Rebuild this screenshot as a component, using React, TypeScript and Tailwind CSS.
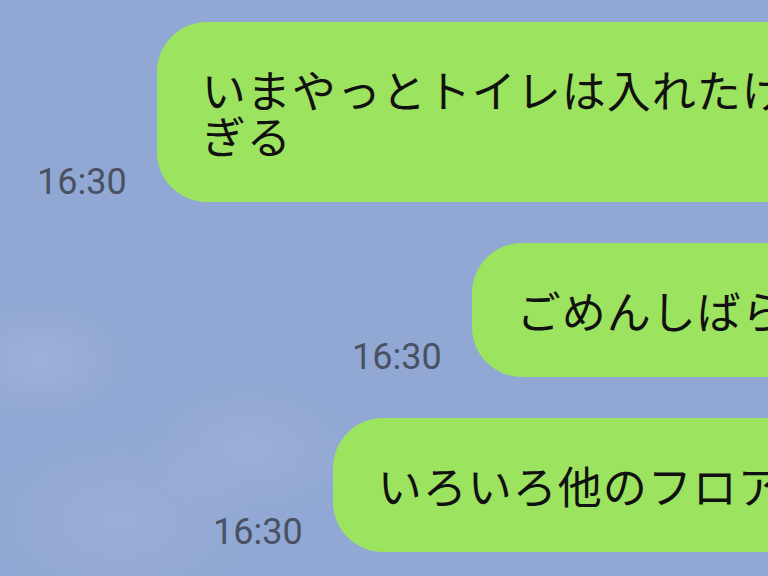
const MESSAGES = [
  { time: "16:30", indent: "pl-[37px]", lines: ["いまやっとトイレは入れたけど混みす", "ぎる"] },
  { time: "16:30", indent: "pl-[352px]", lines: ["ごめんしばらく返信できないかも"] },
  { time: "16:30", indent: "pl-[213px]", lines: ["いろいろ他のフロアも見てくるね"] },
];

export default function App() {
  return (
    <div className="w-[768px] h-[576px] overflow-hidden bg-[#91a8d4] bg-[radial-gradient(ellipse_90px_60px_at_40px_360px,rgba(255,255,255,0.10),transparent),radial-gradient(ellipse_110px_70px_at_250px_450px,rgba(255,255,255,0.08),transparent),radial-gradient(ellipse_140px_90px_at_120px_520px,rgba(255,255,255,0.07),transparent)] pt-[22px] flex flex-col gap-[41px]">
      {MESSAGES.map((m, i) => (
        <div key={i} className={`flex items-end gap-[30px] ${m.indent}`}>
          <span className="shrink-0 pb-[2px] text-[36px] leading-none text-[#4a5163] font-['Roboto',sans-serif]">
            {m.time}
          </span>
          <div className="shrink-0 rounded-[50px] bg-[#9ce35f] pl-[45px] pr-[60px] pt-[44px] pb-[44px] whitespace-nowrap text-[44px] leading-[46px] tracking-[1px] text-[#111] font-['Noto_Sans_CJK_JP',sans-serif]">
            {m.lines.map((l, j) => (
              <div key={j}>{l}</div>
            ))}
          </div>
        </div>
      ))}
    </div>
  );
}
